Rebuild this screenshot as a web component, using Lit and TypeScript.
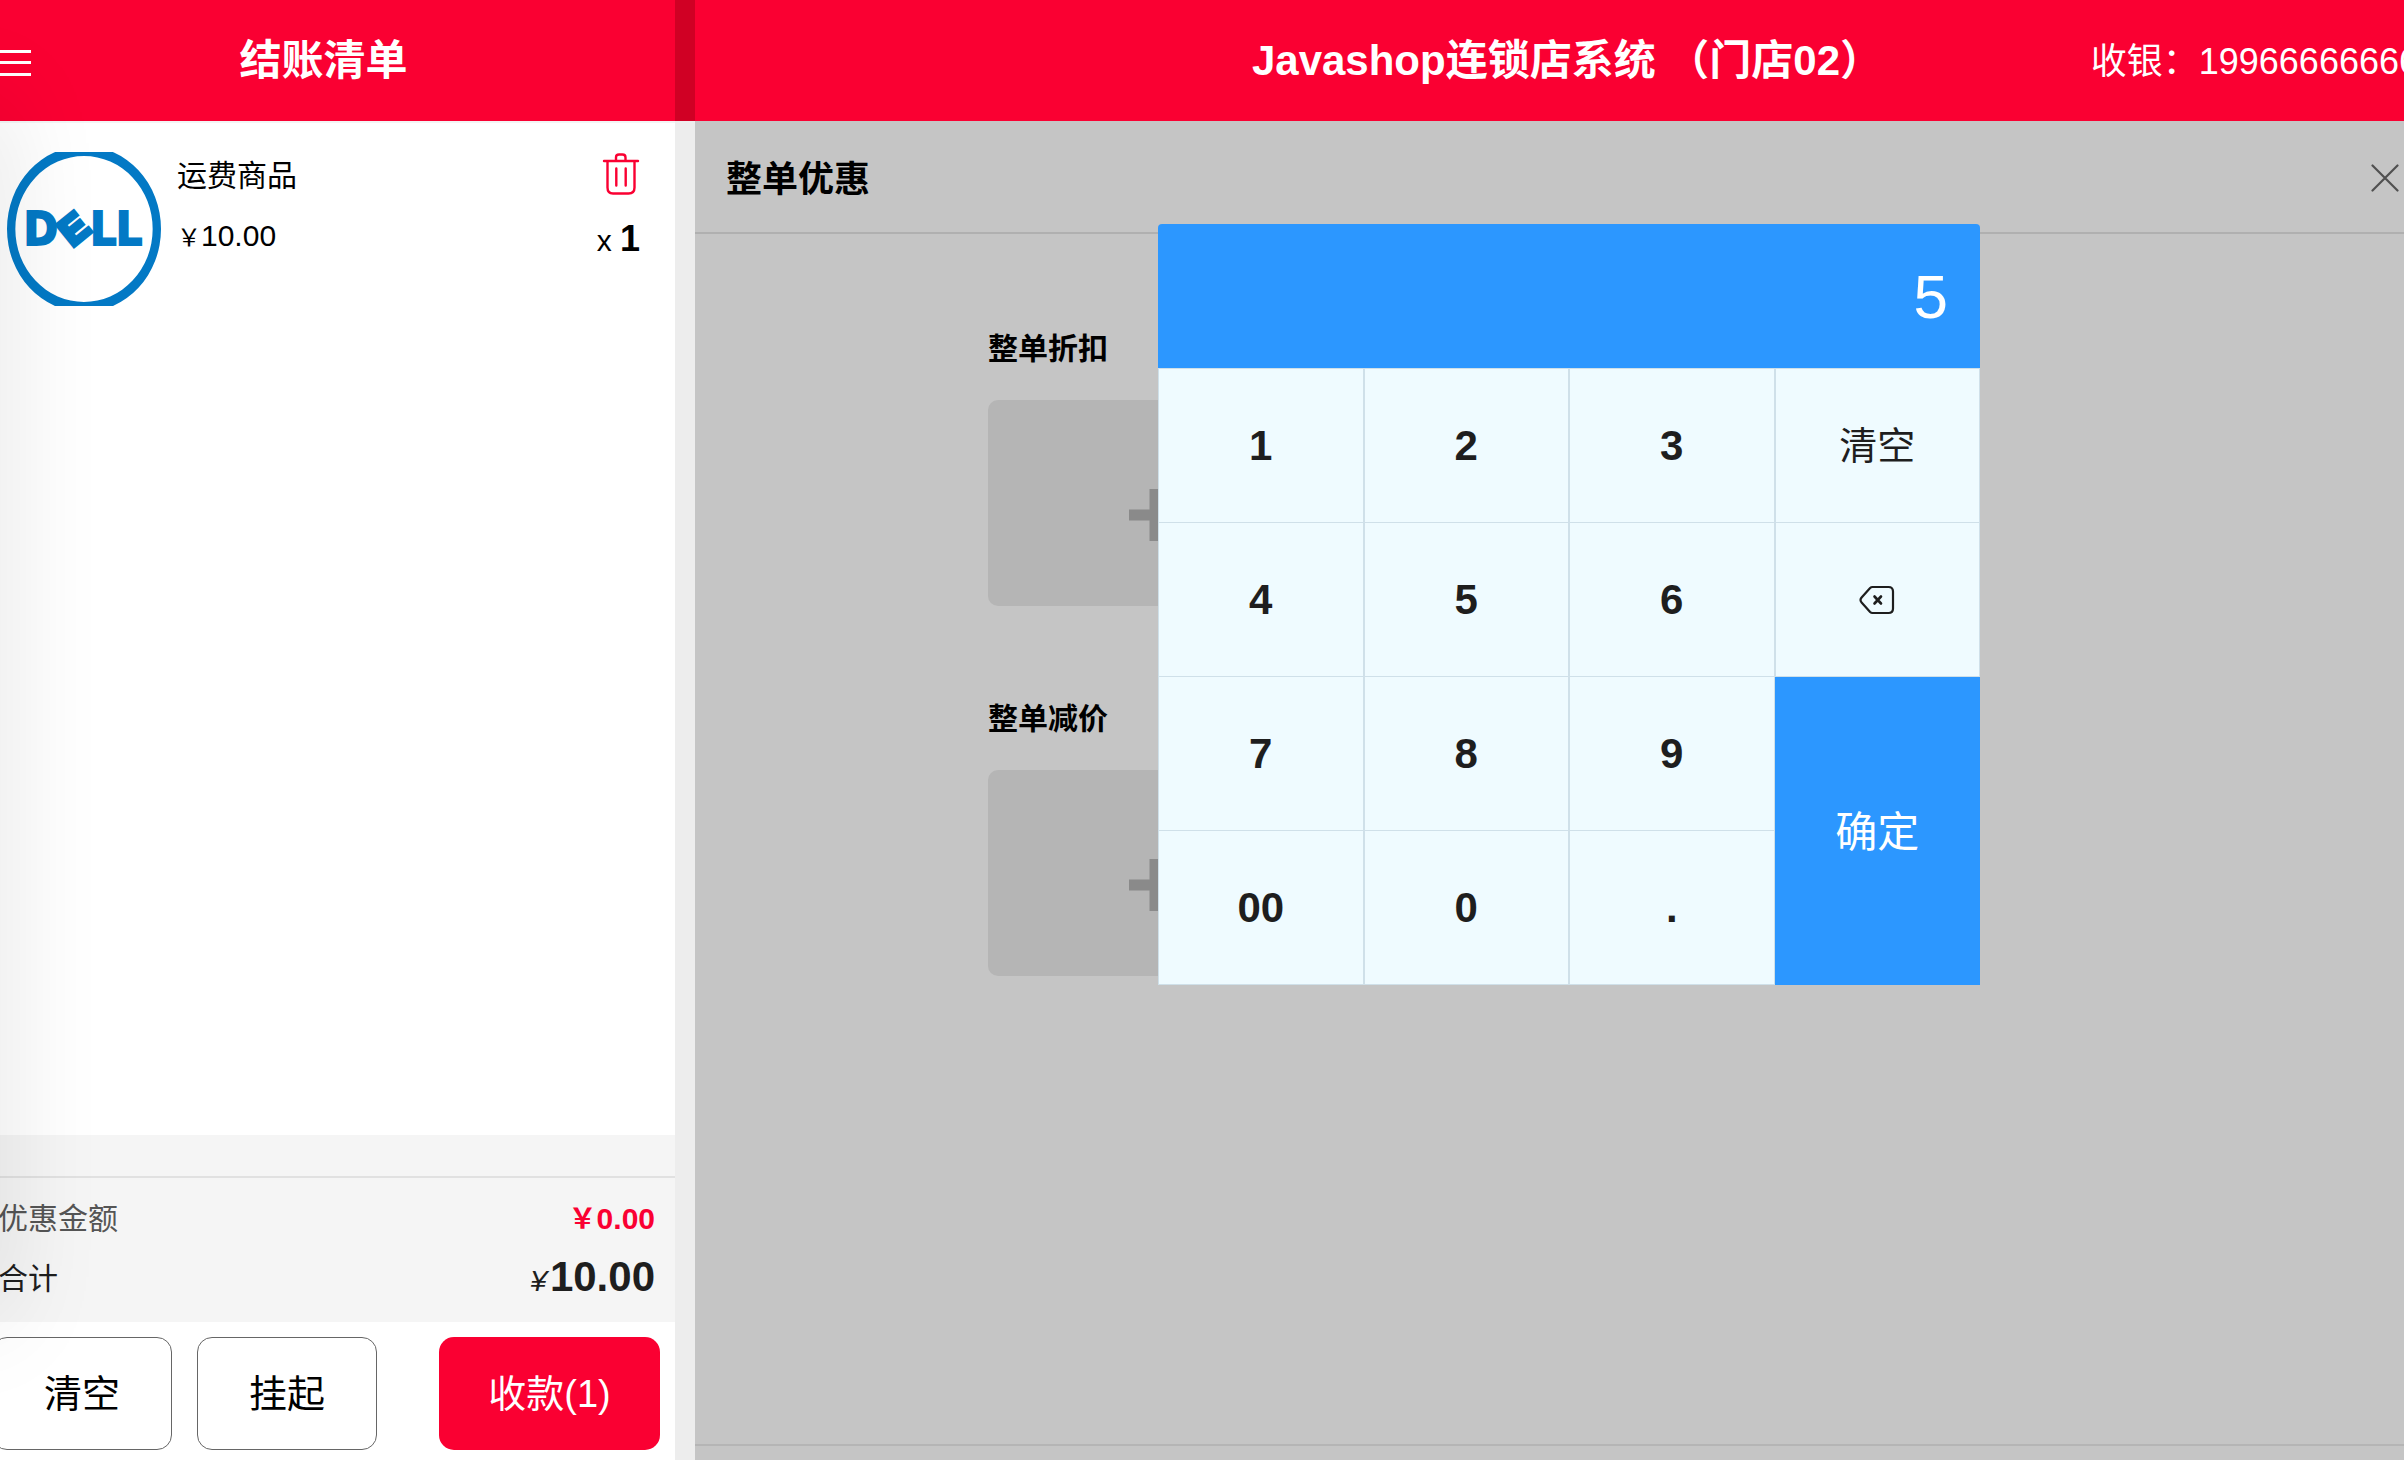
import { LitElement, html, css, svg } from "lit";
import { customElement, state } from "lit/decorators.js";

const baseStyles = css`
  * {
    box-sizing: border-box;
    margin: 0;
    padding: 0;
  }
  button {
    border: 0;
    background: none;
    color: inherit;
    font: inherit;
    cursor: pointer;
  }
  svg {
    display: block;
  }
`;

const menuIcon = html`<svg width="38" height="26" viewBox="0 0 38 26" aria-hidden="true">
  <path d="M0 1.5H38M0 12.5H38M0 24.5H38" stroke="#fff" stroke-width="3" />
</svg>`;

const trashIcon = html`<svg width="38" height="42" viewBox="0 0 38 42" fill="none" stroke="#fa0032" stroke-width="2.4" stroke-linecap="round" aria-hidden="true">
  <path d="M2 8H36" />
  <path d="M14 7.500V4.500C14 2.600 15 1.500 17 1.500H20.500C22.500 1.500 23.500 2.600 23.500 4.500V7.500" />
  <path d="M5.500 8.500V34.500C5.500 38.500 7.500 40.500 11 40.500H26.500C30.500 40.500 32.500 38.500 32.500 34.500V8.500" />
  <path d="M14.300 15.500V32.500M23.700 15.500V32.500" />
</svg>`;

const closeIcon = html`<svg width="28" height="28" viewBox="0 0 28 28" fill="none" stroke="#505050" stroke-width="2.2" stroke-linecap="round" aria-hidden="true">
  <path d="M1.500 1.500L26.500 26.500M26.500 1.500L1.500 26.500" />
</svg>`;

const plusIcon = html`<svg width="52" height="52" viewBox="0 0 52 52" aria-hidden="true">
  <path d="M20.500 0H31.500V20.500H52V31.500H31.500V52H20.500V31.500H0V20.500H20.500Z" fill="#8a8a8a" />
</svg>`;

const backspaceIcon = html`<svg width="36" height="30" viewBox="0 0 36 30" fill="none" stroke="#1e1e1e" stroke-width="2.2" stroke-linejoin="round" stroke-linecap="round" aria-hidden="true">
  <path d="M13.500 2H29.500C32.500 2 34 3.500 34 6.500V23.500C34 26.500 32.500 28 29.500 28H13.500C12.500 28 11.800 27.700 11.100 27L2.600 17.500C1.300 16 1.300 14 2.600 12.500L11.100 3C11.800 2.300 12.500 2 13.500 2Z" />
  <path d="M15.500 11.500L22 18.500M22 11.500L15.500 18.500" stroke-width="2.600" />
</svg>`;

const logo = html`<svg width="154" height="154" viewBox="21 36 462 462" role="img" aria-label="DELL">
  ${svg`<path fill="#0379c5" fill-rule="evenodd" d="M21 267A231 249 0 1 0 483 267A231 249 0 1 0 21 267ZM46 267A206 219 0 1 1 458 267A206 219 0 1 1 46 267Z" />
  <g font-family="DejaVu Sans Condensed, Liberation Sans, sans-serif" font-weight="700" fill="#0379c5" stroke="#0379c5">
    <text x="71" y="315" font-size="137" stroke-width="6">D</text>
    <text x="271" y="315" font-size="137" stroke-width="6">L</text>
    <text x="348" y="315" font-size="137" stroke-width="6">L</text>
    <text transform="translate(216 322) rotate(-39)" font-family="Liberation Sans, sans-serif" font-size="116" stroke-width="14">E</text>
  </g>`}
</svg>`;

@customElement("order-panel")
class OrderPanel extends LitElement {
  static styles = [
    baseStyles,
    css`
      :host {
        display: flex;
        flex-direction: column;
        background: #fff;
      }
      .bar {
        display: grid;
        grid-template-columns: 1fr auto 1fr;
        align-items: center;
        height: 121px;
        padding: 0 21px 0 17px;
        background: #fa0032;
        color: #fff;
      }
      .menu {
        justify-self: start;
        padding-top: 5px;
      }
      h1 {
        font-size: 42px;
        font-weight: 700;
        line-height: 60px;
      }
      .items {
        flex: 1;
        list-style: none;
        padding: 29px 35px 0 31px;
        border-top: 2px solid #f4f4f4;
      }
      .item {
        display: flex;
        gap: 16px;
        color: #000;
        font-size: 30px;
      }
      .info {
        flex: 1;
        line-height: 60px;
      }
      .info p:first-child {
        line-height: 48px;
        padding-bottom: 6px;
      }
      .yen {
        font-size: 24px;
      }
      .side {
        display: flex;
        flex-direction: column;
        align-items: flex-end;
        gap: 24px;
        padding-top: 1px;
      }
      .qty {
        line-height: 40px;
      }
      .qty b {
        font-size: 36px;
      }
      .spacer {
        height: 41px;
        background: #f5f5f5;
      }
      .totals {
        border-top: 2px solid #e1e1e1;
        background: #f5f5f5;
        padding: 11px 20px 13px 22px;
        font-size: 30px;
        color: #1e1e1e;
      }
      .row {
        display: flex;
        justify-content: space-between;
        align-items: center;
        height: 60px;
        line-height: 60px;
      }
      .discount dt {
        color: #555;
      }
      .discount dd {
        color: #fa0032;
        font-weight: 700;
      }
      .discount .yen {
        font-size: 28px;
      }
      .sum i {
        margin-right: 3px;
      }
      .sum b {
        font-size: 42px;
      }
      .actions {
        display: flex;
        gap: 25px;
        padding: 15px 15px 10px 16px;
      }
      .actions button {
        width: 180px;
        height: 113px;
        padding-bottom: 6px;
        border: 1px solid #666;
        border-radius: 15px;
        font-size: 38px;
        color: #000;
      }
      .actions .pay {
        width: 221px;
        margin-left: auto;
        border: 0;
        background: #fa0032;
        color: #fff;
      }
    `,
  ];

  render() {
    return html`
      <header class="bar">
        <button class="menu" aria-label="菜单">${menuIcon}</button>
        <h1>结账清单</h1>
      </header>
      <ul class="items">
        <li class="item">
          ${logo}
          <div class="info">
            <p>运费商品</p>
            <p><span class="yen">￥</span>10.00</p>
          </div>
          <div class="side">
            <button aria-label="删除">${trashIcon}</button>
            <p class="qty">x <b>1</b></p>
          </div>
        </li>
      </ul>
      <div class="spacer"></div>
      <dl class="totals">
        <div class="row discount">
          <dt>优惠金额</dt>
          <dd><span class="yen">￥</span>0.00</dd>
        </div>
        <div class="row sum">
          <dt>合计</dt>
          <dd><i>¥</i><b>10.00</b></dd>
        </div>
      </dl>
      <div class="actions">
        <button>清空</button>
        <button>挂起</button>
        <button class="pay">收款(1)</button>
      </div>
    `;
  }
}

@customElement("number-pad")
class NumberPad extends LitElement {
  @state() value = "5";

  static styles = [
    baseStyles,
    css`
      :host {
        display: block;
        color: #1e1e1e;
      }
      .display {
        display: flex;
        align-items: center;
        justify-content: flex-end;
        height: 144px;
        padding: 0 32px;
        border-radius: 4px 4px 0 0;
        background: #2c97ff;
        color: #fff;
        font-size: 62px;
      }
      .keys {
        display: grid;
        grid-template-columns: repeat(4, 1fr);
        grid-auto-rows: 154px;
        border-top: 1px solid #cfe0e9;
      }
      .key {
        display: flex;
        align-items: center;
        justify-content: center;
        border: 1px solid #cfe0e9;
        border-top: 0;
        background: #effbff;
        font-size: 42px;
        font-weight: 700;
      }
      .word {
        padding-bottom: 6px;
        font-size: 38px;
        font-weight: 400;
      }
      .confirm {
        grid-column: 4;
        grid-row: 3 / span 2;
        padding-bottom: 6px;
        border: 0;
        background: #2c97ff;
        color: #fff;
        font-weight: 400;
      }
    `,
  ];

  private press(key: string) {
    this.value += key;
  }

  private digit(key: string) {
    return html`<button class="key" @click=${() => this.press(key)}>${key}</button>`;
  }

  render() {
    return html`
      <output class="display">${this.value}</output>
      <div class="keys">
        ${["1", "2", "3"].map((k) => this.digit(k))}
        <button class="key word" @click=${() => (this.value = "")}>清空</button>
        ${["4", "5", "6"].map((k) => this.digit(k))}
        <button class="key" aria-label="退格" @click=${() => (this.value = this.value.slice(0, -1))}>${backspaceIcon}</button>
        ${["7", "8", "9"].map((k) => this.digit(k))}
        <button class="key confirm">确定</button>
        ${["00", "0", "."].map((k) => this.digit(k))}
      </div>
    `;
  }
}

@customElement("discount-panel")
class DiscountPanel extends LitElement {
  static styles = [
    baseStyles,
    css`
      :host {
        display: flex;
        flex-direction: column;
        position: relative;
        background: #c5c5c5;
        color: #000;
      }
      .bar {
        display: grid;
        grid-template-columns: 1fr auto 1fr;
        align-items: center;
        height: 121px;
        padding: 0 24px 0 20px;
        background: #fa0032;
        color: #fff;
      }
      h1 {
        grid-column: 2;
        font-size: 42px;
        line-height: 60px;
        white-space: nowrap;
      }
      .cashier {
        justify-self: end;
        padding-bottom: 6px;
        font-size: 36px;
        white-space: nowrap;
      }
      .heading {
        display: flex;
        align-items: center;
        justify-content: space-between;
        height: 113px;
        padding: 2px 44px 0 31px;
        border-bottom: 2px solid #b0b0b0;
      }
      h2 {
        padding-top: 4px;
        font-size: 36px;
        font-weight: 700;
        line-height: 50px;
      }
      .options {
        flex: 1;
        display: flex;
        flex-direction: column;
        gap: 92px;
        width: 100%;
        max-width: 1162px;
        margin: 0 auto;
        padding-top: 94px;
      }
      .group {
        display: grid;
        grid-template-columns: repeat(3, 1fr);
        column-gap: 80px;
        row-gap: 30px;
      }
      h3 {
        grid-column: 1 / -1;
        font-size: 30px;
        font-weight: 700;
        line-height: 42px;
      }
      .add {
        display: flex;
        align-items: center;
        justify-content: center;
        height: 206px;
        padding-top: 24px;
        border-radius: 10px;
        background: #b5b5b5;
      }
      .foot {
        height: 16px;
        border-top: 2px solid #b5b5b5;
      }
      .pad {
        position: absolute;
        top: 224px;
        left: calc(50% - 411px);
        width: 822px;
      }
    `,
  ];

  render() {
    return html`
      <header class="bar">
        <h1>Javashop连锁店系统 （门店02）</h1>
        <p class="cashier">收银：19966666666</p>
      </header>
      <div class="heading">
        <h2>整单优惠</h2>
        <button aria-label="关闭">${closeIcon}</button>
      </div>
      <div class="options">
        ${["整单折扣", "整单减价"].map(
          (name) => html`<section class="group">
            <h3>${name}</h3>
            <button class="add" aria-label=${name}>${plusIcon}</button>
          </section>`
        )}
      </div>
      <div class="foot"></div>
      <number-pad class="pad"></number-pad>
    `;
  }
}

@customElement("app-root")
class AppRoot extends LitElement {
  static styles = [
    baseStyles,
    css`
      :host {
        display: block;
        position: relative;
        overflow: hidden;
        font-family: "Liberation Sans", "Noto Sans CJK SC", sans-serif;
      }
      .app {
        display: grid;
        grid-template-columns: 699px 20px 1fr;
        min-height: 100vh;
        margin: 0 -39px 0 -24px;
      }
      .gutter {
        background: linear-gradient(#d00024 121px, #ededed 121px);
      }
      .edge {
        position: absolute;
        top: 100px;
        bottom: 140px;
        left: -60px;
        width: 60px;
        box-shadow: 0 0 100px rgba(0, 0, 0, 0.13);
        pointer-events: none;
      }
    `,
  ];

  render() {
    return html`
      <div class="app">
        <order-panel></order-panel>
        <div class="gutter"></div>
        <discount-panel></discount-panel>
      </div>
      <div class="edge"></div>
    `;
  }
}
